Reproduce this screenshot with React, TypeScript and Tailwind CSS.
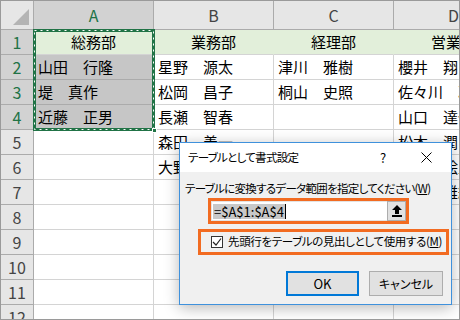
import React from "react";

const JP = "font-['Noto_Sans_CJK_JP','Noto_Sans',sans-serif]";

const rows: string[][] = [
  ["総務部", "業務部", "経理部", "営業部"],
  ["山田　行隆", "星野　源太", "津川　雅樹", "櫻井　翔"],
  ["堤　真作", "松岡　昌子", "桐山　史照", "佐々川　凛"],
  ["近藤　正男", "長瀬　智春", "", "山口　達也"],
  ["", "森田　善一", "", "松本　潤"],
  ["", "大野　智", "", "二宮　絵里"],
  ["", "", "", "相葉　雅紀"],
  ["", "", "", ""],
  ["", "", "", ""],
  ["", "", "", ""],
  ["", "", "", ""],
  ["", "", "", ""],
];

const cols = ["A", "B", "C", "D"];

function Sheet() {
  return (
    <div className="grid grid-cols-[33px_120px_120px_120px_120px] grid-rows-[29px_repeat(12,25px)]">
      <div className="relative bg-[#e6e6e6] border-r border-b border-[#ababab]">
        <svg className="absolute right-[4px] bottom-[4px]" width="16" height="16" viewBox="0 0 16 16">
          <path d="M16 0 L16 16 L0 16 Z" fill="#b4b4b4" />
        </svg>
      </div>
      {cols.map((c, i) => (
        <div
          key={c}
          className={
            i === 0
              ? "flex items-center justify-center bg-[#d2d2d2] text-[#217346] border-r border-b border-[#ababab] text-[16px]"
              : "flex items-center justify-center bg-[#e6e6e6] text-[#444444] border-r border-b border-[#ababab] text-[16px]"
          }
        >
          {c}
        </div>
      ))}
      {rows.map((r, ri) => (
        <React.Fragment key={ri}>
          <div
            className={
              ri < 4
                ? "flex items-center justify-center bg-[#d2d2d2] text-[#217346] border-r border-b border-[#ababab] text-[16px]"
                : "flex items-center justify-center bg-[#e6e6e6] text-[#444444] border-r border-b border-[#ababab] text-[16px]"
            }
          >
            {ri + 1}
          </div>
          {r.map((v, ci) => {
            let cls =
              "flex items-center whitespace-nowrap overflow-hidden text-[15px] text-black border-r border-b ";
            if (ri === 0) {
              cls += "justify-center bg-[#e2efda] border-r-[#e2efda] border-b-[#d4d4d4]";
            } else if (ci === 0 && ri < 4) {
              cls += "pl-[4px] bg-[#c6c6c6] border-[#ababab]";
            } else {
              cls += "pl-[4px] bg-white border-[#d4d4d4]";
            }
            return (
              <div key={ci} className={cls}>
                {v}
              </div>
            );
          })}
        </React.Fragment>
      ))}
    </div>
  );
}

function Dialog() {
  return (
    <div className="absolute left-[178px] top-[141px] w-[273px] h-[163px] border border-[#3f91dc] bg-[#f0f0f0] shadow-[0_3px_14px_rgba(0,0,0,0.28)] flex flex-col text-[11px] text-black [font-feature-settings:'palt']">
      <div className="h-[29px] bg-white flex items-center pl-[8px] shrink-0">
        <span className="flex-1 tracking-[-0.7px] text-[11.5px]">テーブルとして書式設定</span>
        <span className="w-[12px] text-center mr-[32px] text-[13px]">?</span>
        <svg className="mr-[19px]" width="11" height="11" viewBox="0 0 11 11">
          <path d="M0.5 0.5 L10.5 10.5 M10.5 0.5 L0.5 10.5" stroke="#000" strokeWidth="1" />
        </svg>
      </div>
      <div className="flex flex-col">
        <div className="pl-[5px] pt-[8px] h-[26px] leading-[16px] whitespace-nowrap tracking-[-0.7px] text-[11.5px]">
          テーブルに変換するデータ範囲を指定してください(<span className="underline">W</span>)
        </div>
        <div className="ml-[28px] w-[201px] h-[26px] border-[3px] border-[#f26b21] flex">
          <div className="flex-1 bg-white border-y border-l border-[#e3e3e3] flex items-center pl-[1px]">
            <span className="bg-[#c8c8c8] text-[13px] leading-[15px] px-[1px]">=$A$1:$A$4</span>
            <span className="w-[1px] h-[15px] bg-black" />
          </div>
          <div className="w-[19px] bg-[#e1e1e1] border border-[#adadad] flex items-center justify-center">
            <svg width="10" height="12" viewBox="0 0 10 12">
              <path d="M5 0 L10 5 L7 5 L7 9 L3 9 L3 5 L0 5 Z" fill="#000" />
              <rect x="0" y="10" width="10" height="2" fill="#000" />
            </svg>
          </div>
        </div>
        <div className="ml-[18px] mt-[5px] w-[251px] h-[26px] border-[3px] border-[#f26b21] flex items-center">
          <div className="ml-[10px] w-[12px] h-[12px] border border-[#333333] bg-white flex items-center justify-center">
            <svg width="10" height="10" viewBox="0 0 10 10">
              <path d="M1 5 L4 8 L9 1.5" fill="none" stroke="#222" strokeWidth="1.2" />
            </svg>
          </div>
          <span className="ml-[5px] whitespace-nowrap text-[11.5px] tracking-[-0.35px]">
            先頭行をテーブルの見出しとして使用する(<span className="underline">M</span>)
          </span>
        </div>
        <div className="flex justify-end mt-[16px] mr-[8px] gap-[10px]">
          <div className="w-[73px] h-[25px] bg-[#e1e1e1] border-2 border-[#0078d7] flex items-center justify-center text-[13px]">
            OK
          </div>
          <div className="w-[74px] h-[25px] bg-[#e1e1e1] border border-[#adadad] flex items-center justify-center text-[12px]">
            キャンセル
          </div>
        </div>
      </div>
    </div>
  );
}

export default function App() {
  return (
    <div className={`relative w-[460px] h-[320px] overflow-hidden bg-white border border-[#9a9a9a] ${JP}`}>
      <Sheet />
      <svg className="absolute left-[31px] top-[27px]" width="124" height="104" viewBox="0 0 124 104">
        <rect x="2.5" y="2.5" width="119" height="99" fill="none" stroke="#217346" strokeWidth="3" />
        <rect x="2.5" y="2.5" width="119" height="99" fill="none" stroke="#ffffff" strokeWidth="1" strokeDasharray="2 4" />
      </svg>
      <div className="absolute left-[151px] top-[127px] w-[5px] h-[5px] bg-[#217346] border border-white" />
      <Dialog />
    </div>
  );
}
